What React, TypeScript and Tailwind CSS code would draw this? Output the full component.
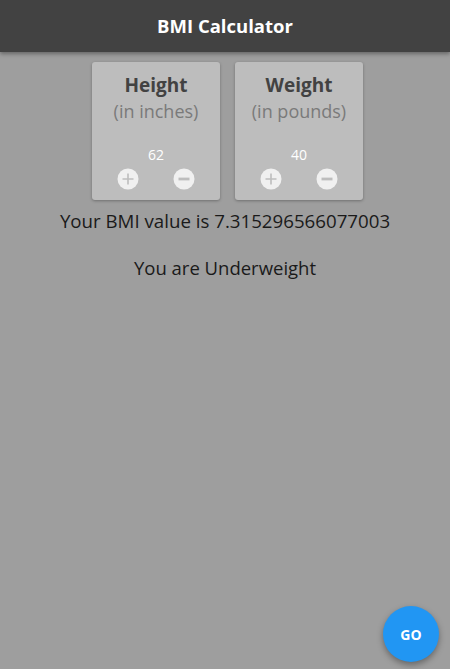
import React from "react"

const font = { fontFamily: '"Open Sans", "Noto Sans", sans-serif' }

function PlusButton() {
  return (
    <svg width="22" height="22" viewBox="0 0 22 22">
      <circle cx="11" cy="11" r="10.5" fill="#f0f0f0" />
      <path d="M11 5.5v11M5.5 11h11" stroke="#bdbdbd" strokeWidth="1.6" />
    </svg>
  )
}

function MinusButton() {
  return (
    <svg width="22" height="22" viewBox="0 0 22 22">
      <circle cx="11" cy="11" r="10.5" fill="#f0f0f0" />
      <rect x="5.5" y="9.6" width="11" height="2.8" fill="#bdbdbd" />
    </svg>
  )
}

// Carte de saisie (taille ou poids)
function InputCard({ title, unit, value }: { title: string; unit: string; value: number }) {
  return (
    <div className="flex h-[138px] w-[128px] flex-col items-center rounded-[3px] bg-[#bdbdbd] pt-[10px] shadow-[0_1px_3px_rgba(0,0,0,0.3)]">
      <div className="text-[19px] leading-[26px] font-bold text-[#424242]">{title}</div>
      <div className="text-[18px] leading-[26px] text-[#7a7a7a]">{unit}</div>
      <div className="mt-[22px] text-[14px] leading-[18px] text-white">{value}</div>
      <div className="mt-[4px] flex w-full justify-between px-[25px]">
        <PlusButton />
        <MinusButton />
      </div>
    </div>
  )
}

export default function App() {
  return (
    <div className="relative h-[669px] w-[450px] overflow-hidden bg-[#9e9e9e]" style={font}>
      {/* Barre d'application */}
      <div className="relative z-10 flex h-[52px] items-center justify-center bg-[#424242] shadow-[0_2px_4px_rgba(0,0,0,0.35)]">
        <span className="text-[18.5px] font-bold text-white">BMI Calculator</span>
      </div>

      <div className="flex flex-col items-center pt-[10px]">
        <div className="flex gap-[15px] pl-[5px]">
          <InputCard title="Height" unit="(in inches)" value={62} />
          <InputCard title="Weight" unit="(in pounds)" value={40} />
        </div>
        <div className="mt-[8px] text-[18.7px] leading-[26px] text-[#1a1a1a]">
          Your BMI value is 7.315296566077003
        </div>
        <div className="mt-[21px] text-[18.5px] leading-[26px] text-[#1a1a1a]">You are Underweight</div>
      </div>

      {/* Bouton flottant */}
      <button className="absolute top-[606px] left-[383px] flex h-[56px] w-[56px] items-center justify-center rounded-full bg-[#2196f3] text-[14px] font-bold text-white shadow-[0_3px_6px_rgba(0,0,0,0.35)]">
        GO
      </button>
    </div>
  )
}
